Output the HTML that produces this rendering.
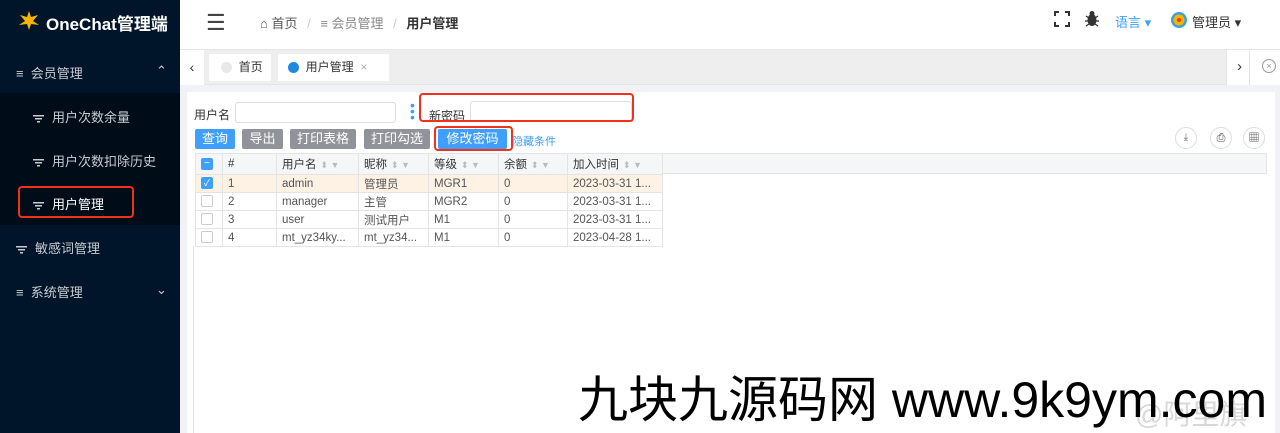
<!DOCTYPE html><html><head><meta charset="utf-8"><style>
*{box-sizing:border-box;margin:0;padding:0}
body{width:1280px;height:433px;overflow:hidden;font-family:"Liberation Sans","Noto Sans CJK SC",sans-serif;font-size:12px;color:#333;background:#f0f2f5;position:relative}
.side{position:absolute;left:0;top:0;width:180px;height:433px;background:#001529;color:#c8ccd2}
.sub{position:absolute;left:0;top:93px;width:180px;height:132px;background:#000c17}
.mi{position:absolute;font-size:13px;color:#c8ccd2;white-space:nowrap}
.hdr{position:absolute;left:180px;top:0;right:0;height:50px;background:#fff;border-bottom:1px solid #e6e6e6}
.tabs{position:absolute;left:180px;top:50px;right:0;height:35px;background:#eeeeee;border-bottom:1px solid #e4e4e4}
.card{position:absolute;left:187px;top:92px;width:1088px;height:341px;background:#fff}
.abs{position:absolute}
.btn{position:absolute;top:129px;height:20px;color:#fff;font-size:13px;text-align:center;line-height:20px;border-radius:2px}
table{position:absolute;left:195px;top:153px;border-collapse:collapse;font-size:11.5px;color:#555}
td{border:1px solid #e4e4e4;height:18px;padding:0 5px;white-space:nowrap;overflow:hidden}
tr.h td{background:#f5f6f8;color:#333;height:21px}
.cb{display:inline-block;width:12px;height:12px;border:1px solid #ccc;border-radius:2px;background:#fff;vertical-align:middle}
.red{position:absolute;border:2px solid #f2311b;border-radius:4px}
.so{color:#bbb;font-size:9px;margin-left:4px}
.fl{display:inline-block;width:11px;height:8px;vertical-align:middle;margin-right:8px;background:linear-gradient(#c8ccd2,#c8ccd2) 0 0/11px 1.5px no-repeat,linear-gradient(#c8ccd2,#c8ccd2) 2px 3px/7px 1.5px no-repeat,linear-gradient(#c8ccd2,#c8ccd2) 4px 6px/3px 1.5px no-repeat}
</style></head><body>
<div class="side">
 <div class="abs" style="left:18px;top:10px;width:22px;height:22px;"><svg width="22" height="22"><polygon points="11,1 13,7 20,5 15,11 21,15 13,14 11,20 9,14 1,15 7,11 2,5 9,7" fill="#f4b400"/></svg></div>
 <div class="abs" style="left:46px;top:10px;font-size:17px;font-weight:bold;color:#fff;white-space:nowrap">OneChat管理端</div>
 <div class="mi" style="left:16px;top:63px">≡&nbsp; 会员管理</div><div class="mi" style="left:156px;top:63px">⌃</div>
 <div class="sub"></div>
 <div class="mi" style="left:33px;top:107px"><span class="fl"></span>用户次数余量</div>
 <div class="mi" style="left:33px;top:151px"><span class="fl"></span>用户次数扣除历史</div>
 <div class="mi" style="left:33px;top:194px;color:#fff"><span class="fl"></span>用户管理</div>
 <div class="red" style="left:18px;top:186px;width:116px;height:32px"></div>
 <div class="mi" style="left:16px;top:238px"><span class="fl"></span>敏感词管理</div>
 <div class="mi" style="left:16px;top:282px">≡&nbsp; 系统管理</div><div class="mi" style="left:156px;top:282px">⌄</div>
</div>
<div class="hdr">
 <div class="abs" style="left:26px;top:10px;font-size:22px;color:#444">☰</div>
 <div class="abs" style="left:80px;top:13px;font-size:13px;color:#555">⌂ 首页 <span style="color:#ccc;margin:0 6px">/</span> <span style="color:#888">≡ 会员管理</span> <span style="color:#ccc;margin:0 6px">/</span> <b style="color:#333">用户管理</b></div>
 <svg class="abs" style="left:874px;top:11px" width="16" height="16" fill="none" stroke="#333" stroke-width="2"><path d="M1 5V1h4M11 1h4v4M15 11v4h-4M5 15H1v-4"/></svg>
 <svg class="abs" style="left:905px;top:10px" width="14" height="17"><ellipse cx="7" cy="10" rx="4.5" ry="6" fill="#333"/><circle cx="7" cy="3.5" r="2.5" fill="#333"/><path d="M1 6l3 2M13 6l-3 2M0 11h3M14 11h-3M1 16l3-2M13 16l-3-2" stroke="#333" stroke-width="1.3"/></svg>
 <div class="abs" style="left:935px;top:12px;font-size:13px;color:#409eff">语言 ▾</div>
 <svg class="abs" style="left:990px;top:11px" width="18" height="20"><circle cx="9" cy="9" r="8" fill="#3aa1e0"/><circle cx="9" cy="9" r="5.5" fill="#f4b400"/><circle cx="9" cy="9" r="2" fill="#e33"/></svg>
 <div class="abs" style="left:1012px;top:12px;font-size:13px;color:#333">管理员 ▾</div>
</div>
<div class="tabs">
 <div class="abs" style="left:0;top:0;width:24px;height:35px;background:#fff;text-align:center;line-height:34px;font-size:14px">‹</div>
 <div class="abs" style="left:29px;top:4px;width:62px;height:27px;background:#fff;line-height:27px;padding-left:12px"><span style="display:inline-block;width:11px;height:11px;border-radius:50%;background:#e8e8e8;vertical-align:middle"></span>&nbsp; 首页</div>
 <div class="abs" style="left:98px;top:4px;width:111px;height:27px;background:#fff;line-height:27px;padding-left:10px"><span style="display:inline-block;width:11px;height:11px;border-radius:50%;background:#1e88e5;vertical-align:middle"></span>&nbsp; 用户管理 &nbsp;<span style="color:#aaa">×</span></div>
 <div class="abs" style="left:1046px;top:0;width:54px;height:35px;background:#fff;border-left:1px solid #e4e4e4"><span class="abs" style="left:10px;top:8px;font-size:15px">›</span><span class="abs" style="left:22px;top:0;width:1px;height:35px;background:#e4e4e4"></span><span class="abs" style="left:35px;top:9px;width:14px;height:14px;border:1px solid #999;border-radius:50%;font-size:9px;text-align:center;line-height:12px;color:#999">×</span></div>
</div>
<div class="card"></div>
<div class="abs" style="left:194px;top:106px;font-size:12px">用户名</div>
<div class="abs" style="left:235px;top:102px;width:161px;height:21px;border:1px solid #ddd;border-radius:3px;background:#fff"></div>
<div class="abs" style="left:410px;top:102px;color:#409eff;font-size:14px;line-height:6px">•<br>•<br>•</div>
<div class="abs" style="left:429px;top:107px">新密码</div>
<div class="abs" style="left:470px;top:101px;width:162px;height:21px;border:1px solid #ddd;border-radius:3px;background:#fff"></div>
<div class="red" style="left:419px;top:93px;width:215px;height:29px"></div>
<div class="btn" style="left:195px;width:40px;background:#409eff">查询</div>
<div class="btn" style="left:242px;width:41px;background:#909399">导出</div>
<div class="btn" style="left:290px;width:66px;background:#909399">打印表格</div>
<div class="btn" style="left:364px;width:66px;background:#909399">打印勾选</div>
<div class="btn" style="left:438px;width:69px;background:#409eff">修改密码</div>
<div class="red" style="left:434px;top:126px;width:79px;height:25px"></div>
<div class="abs" style="left:512px;top:133px;color:#409eff;font-size:11px">隐藏条件</div>
<div class="abs" style="left:1175px;top:127px;width:22px;height:22px;border:1px solid #ddd;border-radius:50%;text-align:center;line-height:20px;font-size:10px;color:#666">⤓</div>
<div class="abs" style="left:1210px;top:127px;width:22px;height:22px;border:1px solid #ddd;border-radius:50%;text-align:center;line-height:20px;font-size:11px;color:#444">⎙</div>
<div class="abs" style="left:1243px;top:127px;width:22px;height:22px;border:1px solid #ddd;border-radius:50%;text-align:center;line-height:20px;font-size:11px;color:#444">▦</div>
<div class="abs" style="left:195px;top:153px;width:1072px;height:21px;background:#f5f6f8;border:1px solid #e4e4e4"></div>
<table>
<colgroup><col style="width:27px"><col style="width:54px"><col style="width:82px"><col style="width:70px"><col style="width:70px"><col style="width:69px"><col style="width:95px"></colgroup>
<tr class="h"><td><span class="cb" style="background:#409eff;border-color:#409eff;color:#fff;font-size:10px;line-height:9px;text-align:center">−</span></td><td>#</td><td>用户名<span class="so">⬍ ▼</span></td><td>昵称<span class="so">⬍ ▼</span></td><td>等级<span class="so">⬍ ▼</span></td><td>余额<span class="so">⬍ ▼</span></td><td>加入时间<span class="so">⬍ ▼</span></td></tr>
<tr style="background:#fdf2e4"><td><span class="cb" style="background:#409eff;border-color:#409eff;color:#fff;font-size:9px;line-height:10px;text-align:center">✓</span></td><td>1</td><td>admin</td><td>管理员</td><td>MGR1</td><td>0</td><td>2023-03-31 1...</td></tr>
<tr><td><span class="cb"></span></td><td>2</td><td>manager</td><td>主管</td><td>MGR2</td><td>0</td><td>2023-03-31 1...</td></tr>
<tr><td><span class="cb"></span></td><td>3</td><td>user</td><td>测试用户</td><td>M1</td><td>0</td><td>2023-03-31 1...</td></tr>
<tr><td><span class="cb"></span></td><td>4</td><td>mt_yz34ky...</td><td>mt_yz34...</td><td>M1</td><td>0</td><td>2023-04-28 1...</td></tr>
</table>
<div class="abs" style="left:193px;top:246px;width:1px;height:187px;background:#e4e4e4"></div>
<div class="abs" style="left:1135px;top:393px;font-size:28px;color:#d8d8d8;white-space:nowrap">@阿里旗</div>
<div class="abs" style="left:578px;top:370px;font-size:50px;color:#000;white-space:nowrap;line-height:60px">九块九源码网 www.9k9ym.com</div>
</body></html>
